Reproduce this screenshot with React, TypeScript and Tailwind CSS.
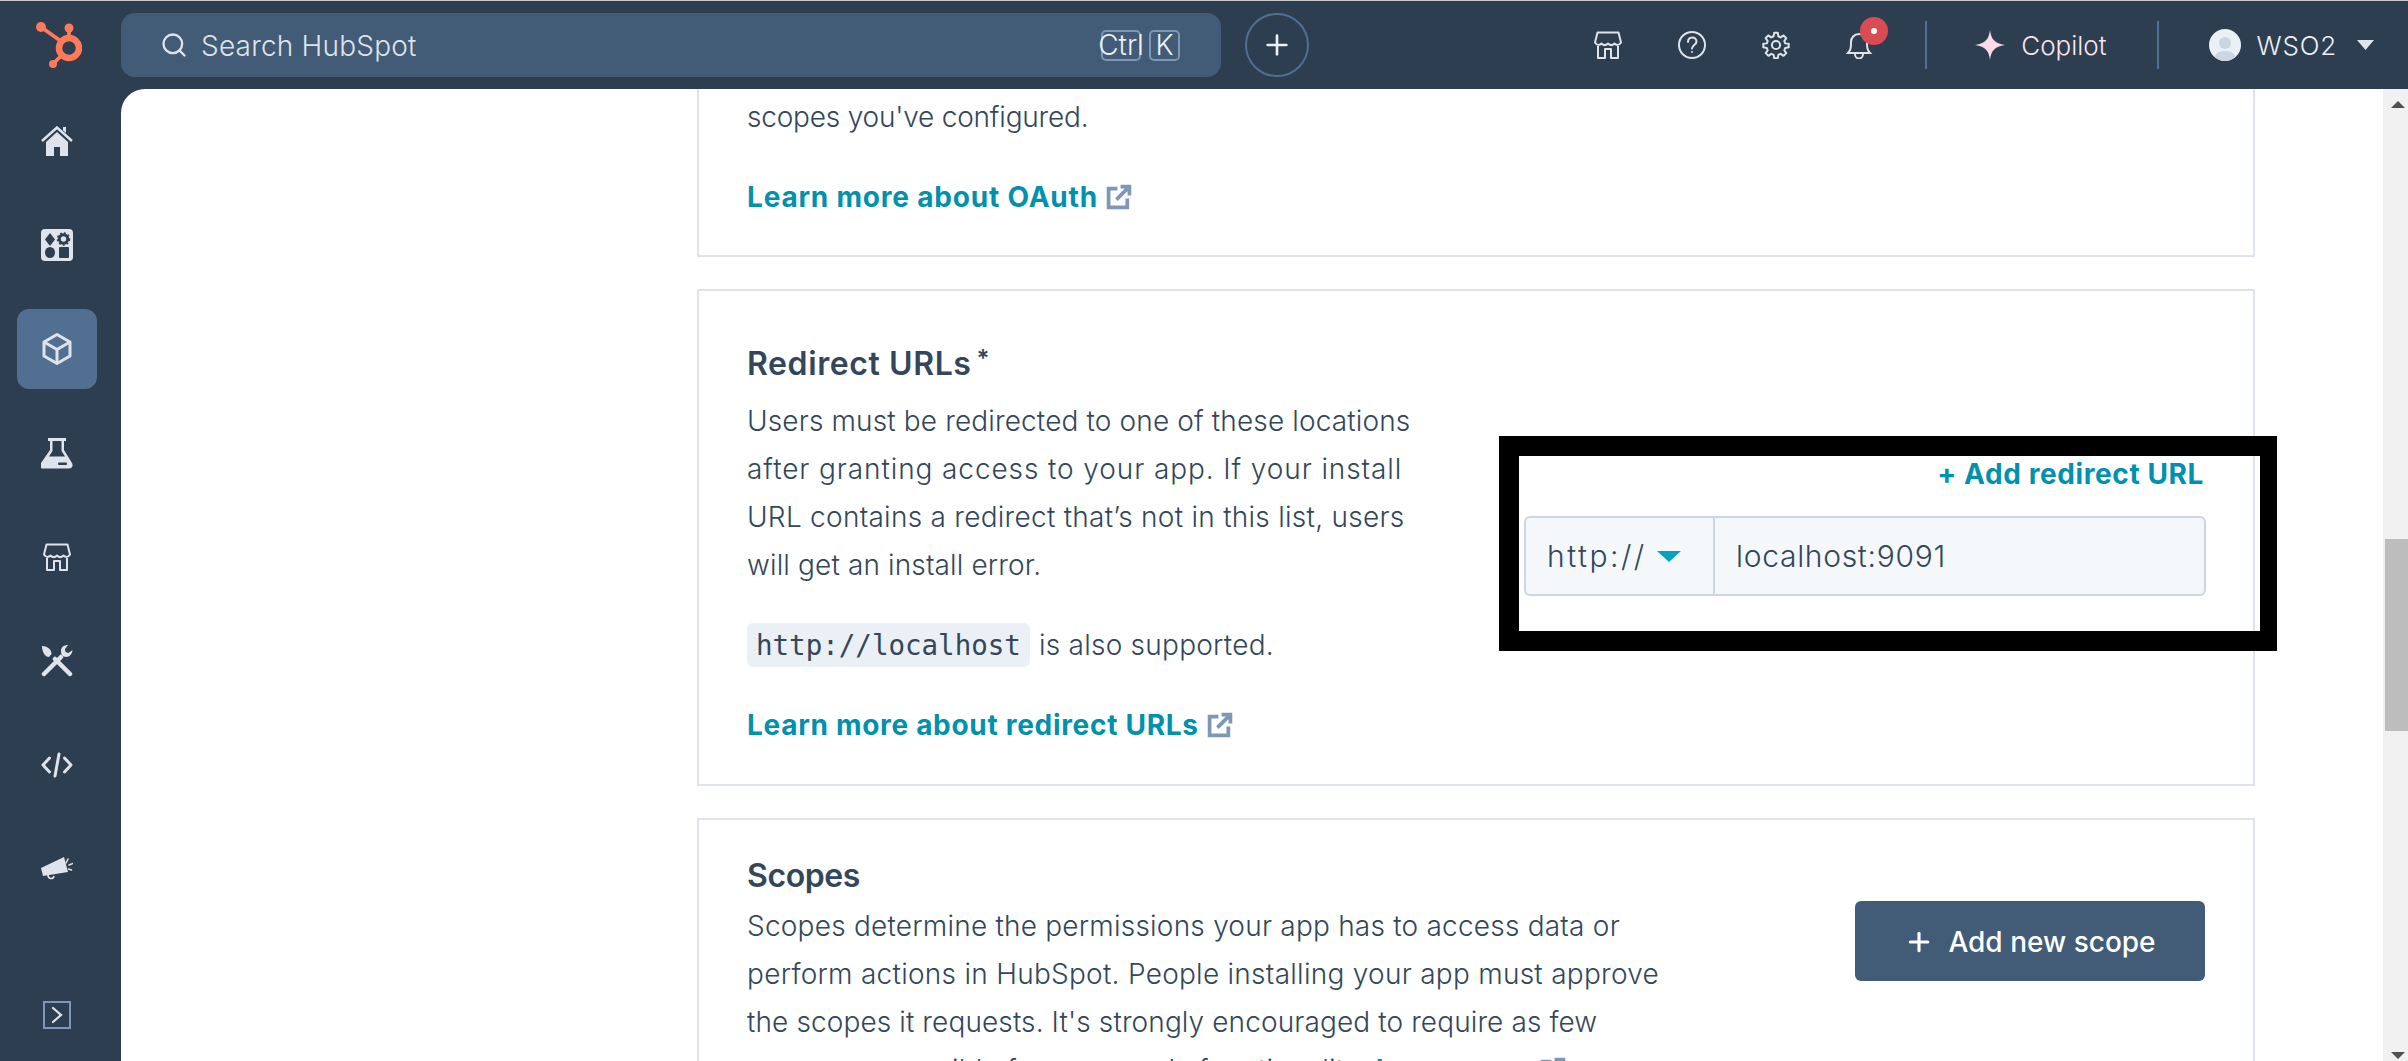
import React from 'react';
import { Search, Plus } from 'lucide-react';

const ic = '#dfe3eb';
const dark = '#2d3e50';

const HubLogo = () => (
  <svg width="46" height="46" viewBox="0 0 46 46" fill="none">
    <circle cx="33" cy="26" r="10" stroke="#ff7a59" strokeWidth="6.500" />
    <circle cx="5" cy="5" r="5" fill="#ff7a59" />
    <circle cx="33" cy="6" r="4.500" fill="#ff7a59" />
    <circle cx="17" cy="42" r="4" fill="#ff7a59" />
    <path d="M5 5L26 20M33 6V17M17 42L26 33" stroke="#ff7a59" strokeWidth="3.800" />
  </svg>
);

const StoreIcon = ({ size = 28 }: { size?: number }) => (
  <svg width={size} height={size} viewBox="0 0 28 28" fill="none" stroke={ic} strokeWidth="2" strokeLinejoin="round">
    <path d="M3.500 1.500h21l2.500 10c-2 3-4.500 3-6.500 1-2 2-4.500 2-6.500 0-2 2-4.500 2-6.500 0-2 2-4.500 2-6.500-1z" />
    <path d="M4 15v12h7v-9h6v9h7V15" />
  </svg>
);

const HomeIcon = () => (
  <svg width="32" height="30" viewBox="0 0 32 30" fill={ic}>
    <path d="M1 15L16 1.500 31 15" fill="none" stroke={ic} strokeWidth="2.500" />
    <path d="M22 1h3v6l-3-2.500z" />
    <path d="M5 16L16 6l11 10v14h-8v-9h-6v9H5z" />
  </svg>
);

const AppsIcon = () => (
  <svg width="32" height="32" viewBox="0 0 32 32">
    <rect width="32" height="32" rx="4" fill={ic} />
    <path d="M9 4l5 6.500-5 6.500-5-6.500z" fill={dark} />
    <circle cx="22.500" cy="10" r="4.200" fill="none" stroke={dark} strokeWidth="3" />
    <circle cx="22.500" cy="10" r="6" fill="none" stroke={dark} strokeWidth="1.500" strokeDasharray="2 2" />
    <ellipse cx="9" cy="23.500" rx="5" ry="5.500" fill={dark} />
    <rect x="18" y="18" width="10" height="11" rx="1" fill={dark} />
  </svg>
);

const CubeIcon = () => (
  <svg width="30" height="32" viewBox="0 0 30 32" fill="none" stroke={ic} strokeWidth="3" strokeLinejoin="round">
    <path d="M15 1.500l13 7.500v14l-13 7.500L2 23V9z" />
    <path d="M2 9l13 7.500L28 9M15 16.500v14" />
  </svg>
);

const FlaskIcon = () => (
  <svg width="32" height="31" viewBox="0 0 32 31">
    <path d="M7 0h18v3h-2v9l8 13c1.500 3 0 5.500-3 5.500H2c-3 0-3.500-2.500-2-5.500l9-13V3H7z" fill={ic} />
    <path d="M11.500 3h9v10l3.500 5.500H8l3.500-5.500z" fill={dark} />
    <rect x="17" y="24.500" width="9" height="2.500" rx="1" fill={dark} />
  </svg>
);

const ToolsIcon = () => (
  <svg width="32" height="32" viewBox="0 0 32 32" fill="none">
    <path d="M3 29L20 12" stroke={ic} strokeWidth="4.500" strokeLinecap="round" />
    <path d="M29 29L14 14" stroke={ic} strokeWidth="4.500" strokeLinecap="round" />
    <path d="M1 1c5 0 9.500 3 9.500 8L8 12C4 12 1 7 1 1z" fill={ic} />
    <path d="M27 0c-4 0-7 2-7 6 0 2 .5 4 2 5 2 1 5 1.500 7-.5 1.500-1.500 2.500-3.500 2.500-5.500l-4 3-3-1-.5-3z" fill={ic} />
  </svg>
);

const CodeIcon = () => (
  <svg width="32" height="26" viewBox="0 0 32 26" fill="none" stroke={ic} strokeWidth="3" strokeLinecap="round" strokeLinejoin="round">
    <path d="M8.500 6L2 13l6.500 7M23.500 6L30 13l-6.500 7M18 2l-4 22" />
  </svg>
);

const MegaphoneIcon = () => (
  <svg width="32" height="24" viewBox="0 0 32 24" fill="none">
    <path d="M0 11L23 0l4 15-25 4z" fill={ic} />
    <path d="M7 18c0 4 5 5 6 1" stroke={ic} strokeWidth="1.600" />
    <path d="M25 6l2-4M28 8l4-1.500M27.500 12l3 1" stroke={ic} strokeWidth="1.500" strokeLinecap="round" />
  </svg>
);

const ExpandIcon = () => (
  <div className="flex h-[28px] w-[28px] items-center justify-center border-2 border-[#7c98b6]">
    <svg width="12" height="18" viewBox="0 0 12 18" fill="none" stroke={ic} strokeWidth="2.200" strokeLinecap="round">
      <path d="M2 2l8 7-8 7" />
    </svg>
  </div>
);

const OutLink = () => (
  <svg className="ml-[8px] inline-block align-[-3px]" width="26" height="26" viewBox="0 0 25 25" fill="none" stroke="#7c98b6" strokeWidth="3.600">
    <path d="M11 4.500H2.500V22.500H20.500V14" />
    <path d="M10 15L22 3M14 2.500h8.500V11" />
  </svg>
);

const sideItems = [
  { key: 'home', icon: <HomeIcon /> },
  { key: 'apps', icon: <AppsIcon /> },
  { key: 'dev', icon: <CubeIcon />, active: true },
  { key: 'lab', icon: <FlaskIcon /> },
  { key: 'store', icon: <StoreIcon /> },
  { key: 'tools', icon: <ToolsIcon /> },
  { key: 'code', icon: <CodeIcon /> },
  { key: 'ads', icon: <MegaphoneIcon /> },
];

const Sidebar = () => (
  <aside className="flex w-[121px] shrink-0 flex-col items-center pt-[12px] pr-[7px] pb-[32px]">
    <div className="flex flex-col gap-[24px]">
      {sideItems.map((it) => (
        <div
          key={it.key}
          className={`flex h-[80px] w-[80px] items-center justify-center rounded-[12px] ${it.active ? 'bg-[#516f90]' : ''}`}
        >
          {it.icon}
        </div>
      ))}
    </div>
    <div className="mt-auto">
      <ExpandIcon />
    </div>
  </aside>
);

const TopBar = () => (
  <header className="flex h-[88px] shrink-0 items-center">
    <div className="flex w-[121px] shrink-0 justify-center pr-[3px]">
      <HubLogo />
    </div>
    <div className="flex h-[64px] w-[1100px] shrink-0 items-center rounded-[14px] bg-[#425b76] pr-[41px] pl-[39px]">
      <Search size={28} strokeWidth={2} className="text-[#dfe3eb]" />
      <span className="mt-[2px] ml-[13px] text-[28px] font-light tracking-[0.2px] text-[#dfe3eb]">Search HubSpot</span>
      <div className="ml-auto flex items-center gap-[8px] text-[28px] font-light text-[#eaf0f6]">
        <span className="flex h-[31px] w-[40px] items-center justify-center rounded-[5px] border-2 border-[#7c98b6]">Ctrl</span>
        <span className="flex h-[31px] w-[31px] items-center justify-center rounded-[5px] border-2 border-[#7c98b6]">K</span>
      </div>
    </div>
    <button className="ml-[24px] flex h-[64px] w-[64px] items-center justify-center rounded-full border-2 border-[#516f90] text-[#eaf0f6]">
      <Plus size={32} strokeWidth={2} />
    </button>
    <div className="ml-auto flex items-center pr-[34px]">
      <div className="flex items-center gap-[56px]">
        <StoreIcon />
        <svg width="28" height="28" viewBox="0 0 28 28" fill="none" stroke={ic} strokeWidth="2">
          <circle cx="14" cy="14" r="13" />
          <path d="M10 11c0-6 8.500-6 8.500-.5 0 3.500-4.500 3.500-4.500 7" strokeLinecap="round" />
          <circle cx="14" cy="21" r="1" fill={ic} stroke="none" />
        </svg>
        <svg width="28" height="28" viewBox="0 0 24 24" fill="none" stroke={ic} strokeWidth="1.700" strokeLinejoin="round">
          <path d="M10.500 1.500h3l.5 3 2 1 2.500-1.700 2.300 2.300-1.700 2.500.8 2 3 .4v3l-3 .5-.8 2 1.700 2.500-2.300 2.300-2.500-1.700-2 .8-.5 3h-3l-.5-3-2-.8-2.500 1.700-2.300-2.300 1.700-2.500-.8-2-3-.5v-3l3-.4.8-2L3.100 6.100 5.400 3.800 7.900 5.500l2-1z" />
          <circle cx="12" cy="12" r="3.500" />
        </svg>
        <div className="relative h-[28px] w-[28px]">
          <svg width="28" height="28" viewBox="0 0 28 28" fill="none" stroke={ic} strokeWidth="2">
            <path d="M2 22h22c-3-3-3-6-3-11 0-4-3-8-8-8s-8 4-8 8c0 5 0 8-3 11z" />
            <path d="M9 23c0 6 8 6 8 0" />
          </svg>
          <span className="absolute -top-[14px] left-[14px] flex h-[28px] w-[28px] items-center justify-center rounded-full bg-[#d94c53]">
            <span className="h-[6px] w-[6px] rounded-full bg-white" />
          </span>
        </div>
      </div>
      <div className="ml-[51px] h-[48px] w-[2px] bg-[#516f90]" />
      <svg className="ml-[48px]" width="30" height="30" viewBox="0 0 30 30" fill="#fdd9e8">
        <path d="M15 0c1.200 9.500 4.500 13 15 15-10.500 2-13.800 5.500-15 15-1.200-9.500-4.500-13-15-15 10.500-2 13.800-5.500 15-15z" />
      </svg>
      <span className="ml-[16px] text-[26px] font-light text-[#fde3ee]">Copilot</span>
      <div className="ml-[50px] h-[48px] w-[2px] bg-[#516f90]" />
      <div className="ml-[50px] flex h-[32px] w-[32px] items-end justify-center overflow-hidden rounded-full bg-[#eaf0f6]">
        <svg width="24" height="27" viewBox="0 0 24 27" fill="#cbd6e2">
          <circle cx="12" cy="9" r="6" />
          <path d="M1 27c0-8 5-10 11-10s11 2 11 10z" />
        </svg>
      </div>
      <span className="ml-[16px] text-[26px] font-light tracking-[0.8px] text-[#eaf0f6]">WSO2</span>
      <svg className="ml-[20px]" width="17" height="10" viewBox="0 0 17 10" fill="#dfe3eb">
        <path d="M0 0h17L8.500 10z" />
      </svg>
    </div>
  </header>
);

const Scrollbar = () => (
  <div className="flex w-[25px] shrink-0 flex-col bg-[#f1f1f1] pt-[12px]">
    <svg className="ml-[8px]" width="14" height="7" viewBox="0 0 14 7" fill="#505050">
      <path d="M7 0l7 7H0z" />
    </svg>
    <div className="mt-[431px] ml-[2px] h-[192px] w-[23px] shrink-0 bg-[#bdbdbd]" />
    <svg className="mt-[321px] ml-[8px]" width="14" height="7" viewBox="0 0 14 7" fill="#505050">
      <path d="M0 0h14L7 7z" />
    </svg>
  </div>
);

const linkCls = 'text-[28px] leading-[48px] font-bold text-[#0091ae]';
const bodyCls = 'text-[28px] leading-[48px] font-light text-[#33475b]';

const Content = () => (
  <main className="relative flex min-w-0 flex-1 overflow-hidden rounded-tl-[24px] bg-white">
    <div className="min-w-0 flex-1 pl-[576px]">
      <div className="flex w-[1558px] flex-col gap-[32px]">
        {/* cut off by the scroll position */}
        <section className="h-[168px] border-2 border-t-0 border-[#dfe3eb] pt-[4px] pl-[48px]">
          <p className={`tracking-[-0.2px] ${bodyCls}`}>scopes you've configured.</p>
          <p className={`mt-[32px] tracking-[0.8px] ${linkCls}`}>
            Learn more about OAuth
            <OutLink />
          </p>
        </section>

        <section className="flex h-[497px] justify-between border-2 border-[#dfe3eb] pt-[51px] pr-[47px] pl-[48px]">
          <div>
            <h2 className="text-[32px] leading-[44px] font-semibold tracking-[0.6px] text-[#33475b]">
              Redirect URLs<sup className="top-[-8px] ml-[5px] text-[24px] font-semibold">*</sup>
            </h2>
            <p className={`mt-[11px] ${bodyCls}`}>
              <span className="block tracking-[0.14px]">Users must be redirected to one of these locations</span>
              <span className="block tracking-[0.9px]">after granting access to your app. If your install</span>
              <span className="block tracking-[0.27px]">URL contains a redirect that’s not in this list, users</span>
              <span className="block tracking-[0.14px]">will get an install error.</span>
            </p>
            <p className={`mt-[32px] tracking-[0.25px] ${bodyCls}`}>
              <code className="mr-[9px] rounded-[6px] bg-[#eaf0f6] px-[9px] py-[6px] font-['DejaVu_Sans_Mono',monospace] text-[27.500px] font-normal tracking-normal">
                http://localhost
              </code>
              is also supported.
            </p>
            <p className={`mt-[32px] tracking-[0.7px] ${linkCls}`}>
              Learn more about redirect URLs
              <OutLink />
            </p>
          </div>
          <div className="mt-[108px] w-[682px]">
            <div className={`pr-[2px] text-right tracking-[0.6px] ${linkCls}`}>+ Add redirect URL</div>
            <div className="mt-[18px] flex h-[80px] items-center rounded-[6px] border-2 border-[#cbd6e2] bg-[#f5f8fa] text-[30px] font-light text-[#33475b]">
              <div className="flex h-full w-[189px] items-center border-r-2 border-[#cbd6e2] pl-[21px]">
                <span className="tracking-[2.500px]">http://</span>
                <svg className="ml-[10px]" width="24" height="11" viewBox="0 0 24 11" fill="#00a4bd">
                  <path d="M0 0h24L12 11z" />
                </svg>
              </div>
              <span className="pl-[21px] tracking-[0.7px]">localhost:9091</span>
            </div>
          </div>
        </section>

        <section className="flex justify-between border-2 border-b-0 border-[#dfe3eb] pt-[34px] pr-[48px] pl-[48px]">
          <div>
            <h2 className="text-[32px] leading-[44px] font-semibold tracking-[-0.4px] text-[#33475b]">Scopes</h2>
            <p className={`mt-[4px] ${bodyCls}`}>
              <span className="block tracking-[0.22px]">Scopes determine the permissions your app has to access data or</span>
              <span className="block tracking-[0.27px]">perform actions in HubSpot. People installing your app must approve</span>
              <span className="block tracking-[0.11px]">the scopes it requests. It's strongly encouraged to require as few</span>
              <span className="block tracking-[0.2px]">
                scopes as possible for your app's functionality. <span className="font-bold text-[#0091ae]">Learn more</span>
                <OutLink />
              </span>
            </p>
          </div>
          <button className="mt-[47px] flex h-[80px] w-[350px] items-center justify-center rounded-[6px] bg-[#425b76] pt-[2px] text-[28px] font-medium text-white">
            <Plus size={30} strokeWidth={2.500} className="mr-[14px]" />
            Add new scope
          </button>
        </section>
      </div>
    </div>
    <Scrollbar />

    {/* annotation drawn on top of the screenshot */}
    <div className="pointer-events-none absolute top-[347px] left-[1378px] h-[215px] w-[778px] border-[20px] border-r-[17px] border-black" />
  </main>
);

export default function App() {
  return (
    <div className="flex h-[1061px] w-[2408px] flex-col overflow-hidden border-t border-[#c9c9c9] bg-[#2d3e50] font-['Inter',sans-serif]">
      <TopBar />
      <div className="flex min-h-0 flex-1">
        <Sidebar />
        <Content />
      </div>
    </div>
  );
}
